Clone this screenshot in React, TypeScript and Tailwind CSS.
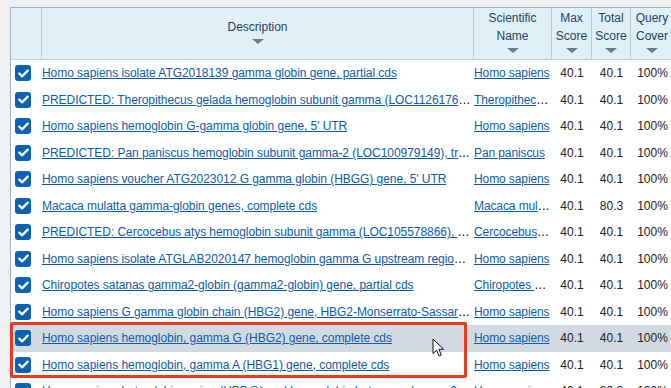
import React from 'react'

type Hit = {
  desc: string
  sci: string
  max: string
  total: string
  cover: string
  active?: boolean
}

const HITS: Hit[] = [
  { desc: 'Homo sapiens isolate ATG2018139 gamma globin gene, partial cds', sci: 'Homo sapiens', max: '40.1', total: '40.1', cover: '100%' },
  { desc: 'PREDICTED: Theropithecus gelada hemoglobin subunit gamma (LOC112617600), mRNA', sci: 'Theropithecus gelada', max: '40.1', total: '40.1', cover: '100%' },
  { desc: "Homo sapiens hemoglobin G-gamma globin gene, 5' UTR", sci: 'Homo sapiens', max: '40.1', total: '40.1', cover: '100%' },
  { desc: 'PREDICTED: Pan paniscus hemoglobin subunit gamma-2 (LOC100979149), transcript variant X1', sci: 'Pan paniscus', max: '40.1', total: '40.1', cover: '100%' },
  { desc: "Homo sapiens voucher ATG2023012 G gamma globin (HBGG) gene, 5' UTR", sci: 'Homo sapiens', max: '40.1', total: '40.1', cover: '100%' },
  { desc: 'Macaca mulatta gamma-globin genes, complete cds', sci: 'Macaca mulatta', max: '40.1', total: '80.3', cover: '100%' },
  { desc: 'PREDICTED: Cercocebus atys hemoglobin subunit gamma (LOC105578866), mRNA', sci: 'Cercocebus atys', max: '40.1', total: '40.1', cover: '100%' },
  { desc: 'Homo sapiens isolate ATGLAB2020147 hemoglobin gamma G upstream region, partial sequence', sci: 'Homo sapiens', max: '40.1', total: '40.1', cover: '100%' },
  { desc: 'Chiropotes satanas gamma2-globin (gamma2-globin) gene, partial cds', sci: 'Chiropotes satanas', max: '40.1', total: '40.1', cover: '100%' },
  { desc: 'Homo sapiens G gamma globin chain (HBG2) gene, HBG2-Monserrato-Sassari allele', sci: 'Homo sapiens', max: '40.1', total: '40.1', cover: '100%' },
  { desc: 'Homo sapiens hemoglobin, gamma G (HBG2) gene, complete cds', sci: 'Homo sapiens', max: '40.1', total: '40.1', cover: '100%', active: true },
  { desc: 'Homo sapiens hemoglobin, gamma A (HBG1) gene, complete cds', sci: 'Homo sapiens', max: '40.1', total: '40.1', cover: '100%' },
  { desc: 'Homo sapiens beta globin region (HBB@) and hemoglobin beta pseudogene 2 (HBBP2) gene', sci: 'Homo sapiens', max: '40.1', total: '80.3', cover: '100%' },
]

function SortArrow() {
  return <div className="mx-auto mt-[3px] w-0 h-0 border-l-[6px] border-r-[6px] border-t-[5px] border-l-transparent border-r-transparent border-t-[#6e7a86]" />
}

function HeadCell({ lines, className }: { lines: string[]; className: string }) {
  return (
    <div className={`${className} shrink-0 h-full border-r border-[#bccad6] flex flex-col items-center justify-center pb-[5px] text-center leading-[18px] text-[#1f4068]`}>
      {lines.map(l => <div key={l}>{l}</div>)}
      <SortArrow />
    </div>
  )
}

function CheckBox() {
  return (
    <div className="w-4 h-4 rounded-[3px] bg-[#0b62b3] flex items-center justify-center">
      <svg width="11" height="9" viewBox="0 0 11 9" fill="none">
        <path d="M1.3 4.6 L4.2 7.3 L9.7 1.6" stroke="white" strokeWidth="2.3" strokeLinecap="round" strokeLinejoin="round" />
      </svg>
    </div>
  )
}

export default function App() {
  return (
    <div className="relative w-[671px] h-[388px] overflow-hidden bg-[#f0f0f0] pl-[10px] pt-[7px] font-['Liberation_Sans',Arial,sans-serif] text-[12px]">
      <div className="w-[700px] border-l border-t border-[#9cb2c7] bg-white">
        {/* header */}
        <div className="flex h-[52px] bg-[#dff0f7] border-b border-[#c4d1db]">
          <div className="w-[31px] shrink-0 h-full border-r border-[#bccad6]" />
          <HeadCell lines={['Description']} className="w-[432px]" />
          <HeadCell lines={['Scientific', 'Name']} className="w-[78px]" />
          <HeadCell lines={['Max', 'Score']} className="w-[40px]" />
          <HeadCell lines={['Total', 'Score']} className="w-[39px]" />
          <HeadCell lines={['Query', 'Cover']} className="w-[43px]" />
        </div>

        {/* rows */}
        {HITS.map(h => (
          <div key={h.desc} className={`flex items-center h-[26.5px] ${h.active ? 'bg-[#d3d9e0]' : ''}`}>
            <div className="w-[31px] shrink-0 pl-[4px]">
              <CheckBox />
            </div>
            <div className="w-[432px] shrink-0 pr-[2px] truncate tracking-[-0.05px]">
              <span className="text-[#0d5cab] underline">{h.desc}</span>
            </div>
            <div className="w-[78px] shrink-0 truncate tracking-[-0.1px]">
              <span className="text-[#0d5cab] underline">{h.sci}</span>
            </div>
            <div className="w-[40px] shrink-0 text-center text-[#222]">{h.max}</div>
            <div className="w-[39px] shrink-0 text-center text-[#222]">{h.total}</div>
            <div className="w-[43px] shrink-0 text-center text-[#222]">{h.cover}</div>
          </div>
        ))}
      </div>

      {/* selection highlight */}
      <div className="absolute left-[10px] top-[322px] w-[457px] h-[56px] border-[3px] border-[#e9391f] rounded-[2px]" />

      {/* mouse cursor */}
      <svg className="absolute left-[432px] top-[338px]" width="13" height="20" viewBox="0 0 13 20">
        <path d="M1 1 L1 15.5 L4.6 12.2 L7.1 18 L9.3 17 L6.9 11.3 L11.6 11.3 Z" fill="white" stroke="#111" strokeWidth="1" strokeLinejoin="round" />
      </svg>
    </div>
  )
}
